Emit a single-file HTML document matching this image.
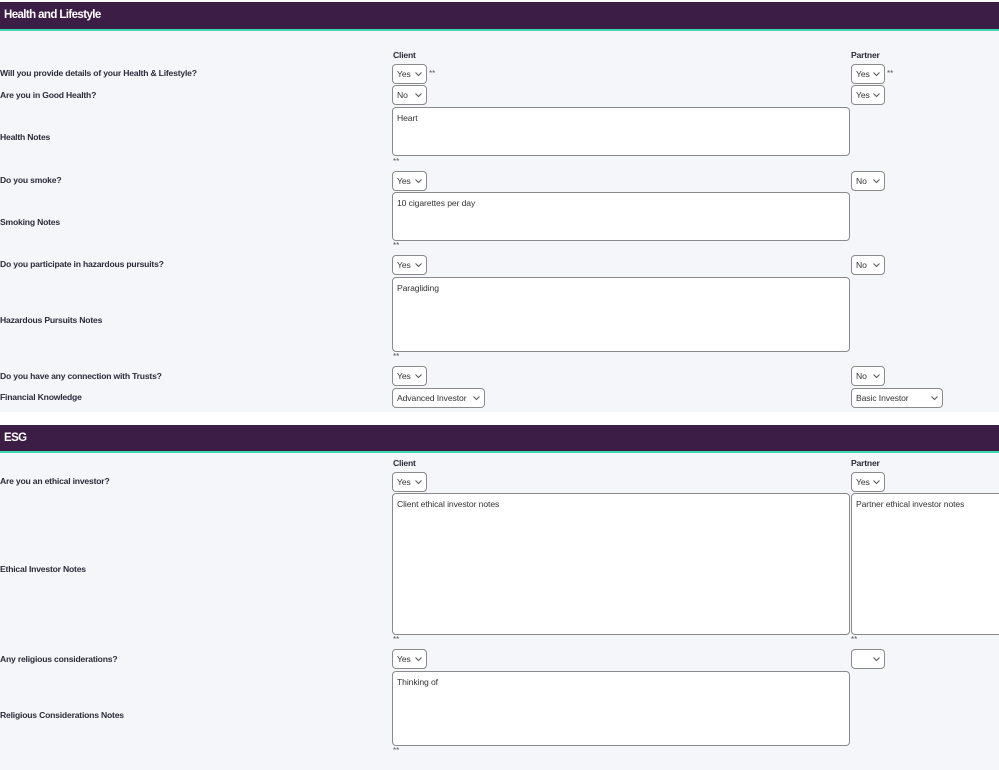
<!DOCTYPE html>
<html><head><meta charset="utf-8"><style>
*{box-sizing:border-box;margin:0;padding:0}
body{width:999px;height:770px;overflow:hidden;background:#fff;font-family:"Liberation Sans",Arial,sans-serif;position:relative}
.bg{position:absolute;left:0;width:999px;background:#f5f6fa}
.hd{position:absolute;left:0;width:999px;background:#3c1d46;border-bottom:2px solid #3fd6b0;color:#fff;font-weight:bold;font-size:11.5px;padding-left:4px;letter-spacing:-0.6px}
.l{position:absolute;left:0;font-size:8.6px;font-weight:bold;color:#2c2c3a;line-height:10px;letter-spacing:-0.2px}
.c{position:absolute;font-size:8.6px;font-weight:bold;color:#2c2c3a;line-height:10px;letter-spacing:-0.2px}
.s{position:absolute;height:20px;border:1px solid #8a8a8a;border-radius:4px;background:#fff;font-size:8.6px;color:#333;line-height:18px;padding-left:4px;letter-spacing:-0.1px}
.s svg{position:absolute;right:4px;top:7px}
.t{position:absolute;border:1px solid #8a8a8a;border-radius:4px;background:#fff;font-size:8.6px;color:#333;padding:5px 4px;letter-spacing:-0.1px}
.a{position:absolute;font-size:8px;color:#555;line-height:8px}
</style></head><body>
<div class="hd" style="top:2px;height:29px;line-height:27px">Health and Lifestyle</div>
<div class="bg" style="top:31px;height:381px"></div>
<div class="hd" style="top:425px;height:28px;line-height:26px">ESG</div>
<div class="bg" style="top:453px;height:317px"></div>

<div class="c" style="left:393px;top:50px">Client</div>
<div class="c" style="left:851px;top:50px">Partner</div>

<div class="l" style="top:68px">Will you provide details of your Health &amp; Lifestyle?</div>
<div class="l" style="top:90px">Are you in Good Health?</div>
<div class="l" style="top:132px">Health Notes</div>
<div class="l" style="top:175px">Do you smoke?</div>
<div class="l" style="top:217px">Smoking Notes</div>
<div class="l" style="top:259px">Do you participate in hazardous pursuits?</div>
<div class="l" style="top:315px">Hazardous Pursuits Notes</div>
<div class="l" style="top:371px">Do you have any connection with Trusts?</div>
<div class="l" style="top:392px">Financial Knowledge</div>

<div class="s" style="left:392px;top:64px;width:35px">Yes<svg width="7" height="5"><path d="M0.5 0.5L3.5 3.5L6.5 0.5" fill="none" stroke="#555"/></svg></div>
<div class="a" style="left:429px;top:70px">**</div>
<div class="s" style="left:851px;top:64px;width:34px">Yes<svg width="7" height="5"><path d="M0.5 0.5L3.5 3.5L6.5 0.5" fill="none" stroke="#555"/></svg></div>
<div class="a" style="left:887px;top:70px">**</div>
<div class="s" style="left:392px;top:85px;width:35px">No<svg width="7" height="5"><path d="M0.5 0.5L3.5 3.5L6.5 0.5" fill="none" stroke="#555"/></svg></div>
<div class="s" style="left:851px;top:85px;width:34px">Yes<svg width="7" height="5"><path d="M0.5 0.5L3.5 3.5L6.5 0.5" fill="none" stroke="#555"/></svg></div>
<div class="t" style="left:392px;top:107px;width:458px;height:49px">Heart</div>
<div class="a" style="left:393px;top:158px">**</div>

<div class="s" style="left:392px;top:171px;width:35px">Yes<svg width="7" height="5"><path d="M0.5 0.5L3.5 3.5L6.5 0.5" fill="none" stroke="#555"/></svg></div>
<div class="s" style="left:851px;top:171px;width:34px">No<svg width="7" height="5"><path d="M0.5 0.5L3.5 3.5L6.5 0.5" fill="none" stroke="#555"/></svg></div>
<div class="t" style="left:392px;top:192px;width:458px;height:49px">10 cigarettes per day</div>
<div class="a" style="left:393px;top:242px">**</div>

<div class="s" style="left:392px;top:255px;width:35px">Yes<svg width="7" height="5"><path d="M0.5 0.5L3.5 3.5L6.5 0.5" fill="none" stroke="#555"/></svg></div>
<div class="s" style="left:851px;top:255px;width:34px">No<svg width="7" height="5"><path d="M0.5 0.5L3.5 3.5L6.5 0.5" fill="none" stroke="#555"/></svg></div>
<div class="t" style="left:392px;top:277px;width:458px;height:75px">Paragliding</div>
<div class="a" style="left:393px;top:353px">**</div>

<div class="s" style="left:392px;top:366px;width:35px">Yes<svg width="7" height="5"><path d="M0.5 0.5L3.5 3.5L6.5 0.5" fill="none" stroke="#555"/></svg></div>
<div class="s" style="left:851px;top:366px;width:34px">No<svg width="7" height="5"><path d="M0.5 0.5L3.5 3.5L6.5 0.5" fill="none" stroke="#555"/></svg></div>
<div class="s" style="left:392px;top:388px;width:93px">Advanced Investor<svg width="7" height="5"><path d="M0.5 0.5L3.5 3.5L6.5 0.5" fill="none" stroke="#555"/></svg></div>
<div class="s" style="left:851px;top:388px;width:92px">Basic Investor<svg width="7" height="5"><path d="M0.5 0.5L3.5 3.5L6.5 0.5" fill="none" stroke="#555"/></svg></div>

<div class="c" style="left:393px;top:458px">Client</div>
<div class="c" style="left:851px;top:458px">Partner</div>
<div class="l" style="top:476px">Are you an ethical investor?</div>
<div class="l" style="top:564px">Ethical Investor Notes</div>
<div class="l" style="top:654px">Any religious considerations?</div>
<div class="l" style="top:710px">Religious Considerations Notes</div>

<div class="s" style="left:392px;top:472px;width:35px">Yes<svg width="7" height="5"><path d="M0.5 0.5L3.5 3.5L6.5 0.5" fill="none" stroke="#555"/></svg></div>
<div class="s" style="left:851px;top:472px;width:34px">Yes<svg width="7" height="5"><path d="M0.5 0.5L3.5 3.5L6.5 0.5" fill="none" stroke="#555"/></svg></div>
<div class="t" style="left:392px;top:493px;width:458px;height:142px">Client ethical investor notes</div>
<div class="t" style="left:851px;top:493px;width:160px;height:142px">Partner ethical investor notes</div>
<div class="a" style="left:393px;top:636px">**</div>
<div class="a" style="left:851px;top:636px">**</div>
<div class="s" style="left:392px;top:649px;width:35px">Yes<svg width="7" height="5"><path d="M0.5 0.5L3.5 3.5L6.5 0.5" fill="none" stroke="#555"/></svg></div>
<div class="s" style="left:851px;top:649px;width:34px"><svg width="7" height="5"><path d="M0.5 0.5L3.5 3.5L6.5 0.5" fill="none" stroke="#555"/></svg></div>
<div class="t" style="left:392px;top:671px;width:458px;height:75px">Thinking of</div>
<div class="a" style="left:393px;top:747px">**</div>
</body></html>
